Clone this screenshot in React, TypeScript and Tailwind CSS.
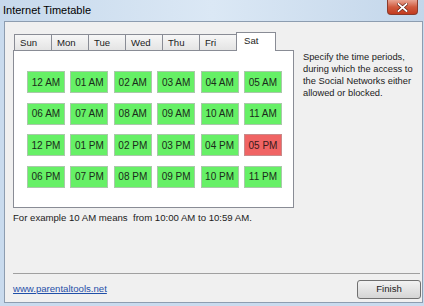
import React from 'react';

const hours = [
  '12 AM', '01 AM', '02 AM', '03 AM', '04 AM', '05 AM',
  '06 AM', '07 AM', '08 AM', '09 AM', '10 AM', '11 AM',
  '12 PM', '01 PM', '02 PM', '03 PM', '04 PM', '05 PM',
  '06 PM', '07 PM', '08 PM', '09 PM', '10 PM', '11 PM',
];

const blocked = ['05 PM'];
const days = ['Sun', 'Mon', 'Tue', 'Wed', 'Thu', 'Fri'];

function CloseButton() {
  return (
    <div className="absolute right-[6px] top-0 flex h-[15px] w-[31px] items-center justify-center rounded-b-[4px] border border-t-0 border-[#8a3b2c] bg-gradient-to-b from-[#e8a493] via-[#d05a3e] to-[#c23a1e]">
      <svg width="11" height="9" viewBox="0 0 11 9">
        <path d="M1.5 1 L9.5 8 M9.5 1 L1.5 8" stroke="#5a1a10" strokeWidth="3" strokeLinecap="square" />
        <path d="M1.5 1 L9.5 8 M9.5 1 L1.5 8" stroke="#ffffff" strokeWidth="1.8" strokeLinecap="square" />
      </svg>
    </div>
  );
}

export default function App() {
  return (
    <div
      className="relative flex h-[306px] w-[424px] flex-col overflow-hidden bg-[#e9eef4] text-[#1b1b1b]"
      style={{ fontFamily: '"Liberation Sans", Arial, sans-serif' }}
    >
      {/* title bar */}
      <div className="relative h-[21px] shrink-0 bg-gradient-to-r from-[#c7d9ec] via-[#dbe8f5] to-[#c3d6ea]">
        <div className="pl-[3px] pt-[3px] text-[11px] leading-[15px] text-black">Internet Timetable</div>
        <CloseButton />
      </div>

      {/* frame */}
      <div className="flex flex-1 bg-[#c9dbee] pb-[3px] pl-[4px]">
        <div className="flex flex-1 border-r-2 border-[#5c6470] pr-[3px]">
          <div className="flex flex-1 flex-col border border-[#8d9db0] bg-[#f0f0f0] pl-[8px] pr-[1px] pt-[9px] text-[9.6px]">
            <div className="flex gap-[9px]">
              {/* tabs + panel */}
              <div className="flex w-[281px] shrink-0 flex-col">
                <div className="flex h-[19px] items-end pl-[1px]">
                  {days.map((d) => (
                    <div
                      key={d}
                      className="-mr-px h-[16px] w-[38px] border border-b-0 border-[#898c95] bg-gradient-to-b from-[#f7f7f7] to-[#e4e4e4] pl-[5px] pt-[1px] leading-[14px]"
                    >
                      {d}
                    </div>
                  ))}
                  <div className="relative z-10 -mb-px h-[19px] w-[40px] border border-b-0 border-[#898c95] bg-white pl-[7px] pt-[1px] leading-[14px]">
                    Sat
                  </div>
                </div>
                <div className="h-[158px] border border-[#898c95] bg-white pl-[13px] pt-[20px]">
                  <div className="grid grid-cols-[repeat(6,38px)] gap-x-[5.4px] gap-y-[9.5px]">
                    {hours.map((h) => (
                      <div
                        key={h}
                        className={`flex h-[22px] items-center justify-center border text-[10px] ${
                          blocked.includes(h)
                            ? 'border-[#c98a8a] bg-[#f06464] text-[#3a1a1a]'
                            : 'border-[#a9c9a9] bg-[#66f066] text-[#1a2a1a]'
                        }`}
                      >
                        {h}
                      </div>
                    ))}
                  </div>
                </div>
              </div>
              <p className="w-[118px] shrink-0 pt-[20px] text-[9.3px] leading-[12px]">
                Specify the time periods, during which the access to the Social Networks either allowed or blocked.
              </p>
            </div>

            <div className="mt-[4px] leading-[12px]">For example 10 AM means&nbsp; from 10:00 AM to 10:59 AM.</div>

            <div className="mr-[1px] mt-auto border-t border-[#a0a0a0]" />
            <div className="flex items-center justify-between pb-[3px] pt-[6px]">
              <span className="text-[#1f4fa8] underline">www.parentaltools.net</span>
              <button className="h-[19px] w-[64px] rounded-[3px] border border-[#707070] bg-gradient-to-b from-[#f2f2f2] to-[#d5d5d5] text-[9.6px]">
                Finish
              </button>
            </div>
          </div>
        </div>
      </div>
    </div>
  );
}
